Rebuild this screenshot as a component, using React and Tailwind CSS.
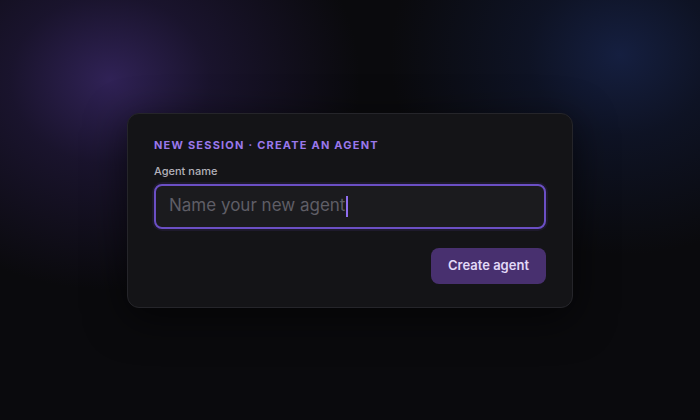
export default function App() {
  return (
    <div
      className="w-[700px] h-[420px] flex items-center justify-center bg-[#0a0a0d] bg-[radial-gradient(ellipse_250px_210px_at_110px_80px,rgba(48,34,86,1)_0%,rgba(36,26,66,0.6)_40%,rgba(10,10,13,0)_100%),radial-gradient(ellipse_230px_200px_at_620px_55px,rgba(21,31,64,1)_0%,rgba(17,25,52,0.6)_40%,rgba(10,10,13,0)_100%)]"
      style={{ fontFamily: "Inter, 'Noto Sans', sans-serif" }}
    >
      <div className="w-[446px] rounded-[12px] border border-[#25252a] bg-[#141417] px-[26px] pt-[24px] pb-[23px] shadow-[0_10px_40px_rgba(0,0,0,0.6)] flex flex-col">
        <div className="text-[11px] leading-[14px] font-bold tracking-[0.11em] text-[#9a78ec] uppercase">
          New session · Create an agent
        </div>
        <div className="mt-[12px] text-[11px] leading-[14px] font-medium text-[#b3b1ba]">
          Agent name
        </div>
        <div className="mt-[6px] h-[45px] rounded-[8px] border-2 border-[#6b4fc4] bg-[#1b1b1e] flex items-center px-[13px] shadow-[0_0_0_2px_rgba(90,60,170,0.15)]">
          <span className="text-[17px] text-[#5f5e66]">Name your new agent</span>
          <span className="ml-[1px] w-[2px] h-[21px] bg-[#8f6ef0]"></span>
        </div>
        <div className="mt-[19px] flex justify-end">
          <button className="h-[36px] w-[115px] rounded-[8px] bg-[#48306f] text-[13px] font-semibold text-[#e2daf8]">
            Create agent
          </button>
        </div>
      </div>
    </div>
  );
}
